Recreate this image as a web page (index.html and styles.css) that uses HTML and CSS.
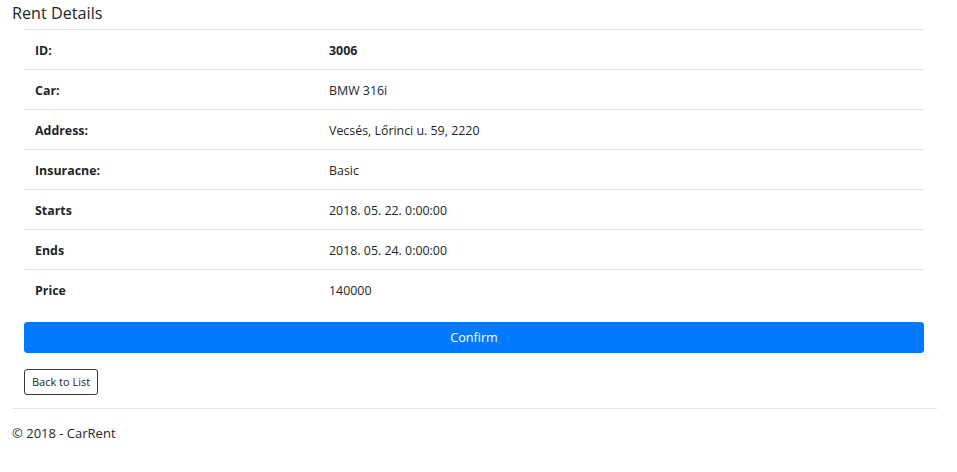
FILE: index.html
```html
<!DOCTYPE html>
<html>
<head>
<meta charset="utf-8">
<title>Rent Details</title>
<link rel="stylesheet" href="styles.css">
</head>
<body>
<div class="container">
  <h4 class="title">Rent Details</h4>
  <div class="content">
    <table class="details">
      <tr><th>ID:</th><td class="strong">3006</td></tr>
      <tr><th>Car:</th><td>BMW 316i</td></tr>
      <tr><th>Address:</th><td>Vecsés, Lőrinci u. 59, 2220</td></tr>
      <tr><th>Insuracne:</th><td>Basic</td></tr>
      <tr><th>Starts</th><td>2018. 05. 22. 0:00:00</td></tr>
      <tr><th>Ends</th><td>2018. 05. 24. 0:00:00</td></tr>
      <tr><th>Price</th><td>140000</td></tr>
    </table>
    <button class="btn-confirm" type="button">Confirm</button>
    <div class="back-row"><a class="btn-back" href="#">Back to List</a></div>
  </div>
  <hr class="sep">
  <footer class="footer">© 2018 - CarRent</footer>
</div>
</body>
</html>
```
FILE: styles.css
```css
html, body {
  margin: 0;
  padding: 0;
  background: #fff;
}
body {
  font-family: "Open Sans", "Noto Sans", sans-serif;
  font-size: 12.4px;
  color: #212529;
}
.container {
  width: 925px;
  padding-left: 12px;
}
.title {
  margin: 0;
  font-size: 16.2px;
  font-weight: 400;
  line-height: 27px;
  height: 29px;
}
.content {
  width: 900px;
  margin-left: 12px;
}
.details {
  width: 100%;
  border-collapse: collapse;
  table-layout: fixed;
}
.details th,
.details td {
  border-top: 1px solid #dee2e6;
  padding: 13px 11px 11px;
  line-height: 15px;
  text-align: left;
  vertical-align: top;
}
.details th {
  width: 272px;
  font-weight: 700;
}
.details td.strong {
  font-weight: 700;
}
.btn-confirm {
  display: block;
  width: 100%;
  height: 31px;
  margin-top: 13px;
  border: 1px solid #007bff;
  border-radius: 3px;
  background: #007bff;
  color: #fff;
  font-family: inherit;
  font-size: 12.6px;
  line-height: 17px;
  padding: 0;
}
.back-row {
  margin-top: 16px;
  height: 26px;
}
.btn-back {
  display: inline-block;
  box-sizing: border-box;
  height: 26px;
  border: 1px solid #343a40;
  border-radius: 3px;
  padding: 4px 7px 0;
  line-height: 16px;
  font-size: 11px;
  color: #212529;
  text-decoration: none;
}
.sep {
  margin: 13px 0 0 0;
  border: 0;
  border-top: 1px solid #e5e5e5;
}
.footer {
  margin-top: 15px;
  font-size: 13px;
  line-height: 18px;
}
```
